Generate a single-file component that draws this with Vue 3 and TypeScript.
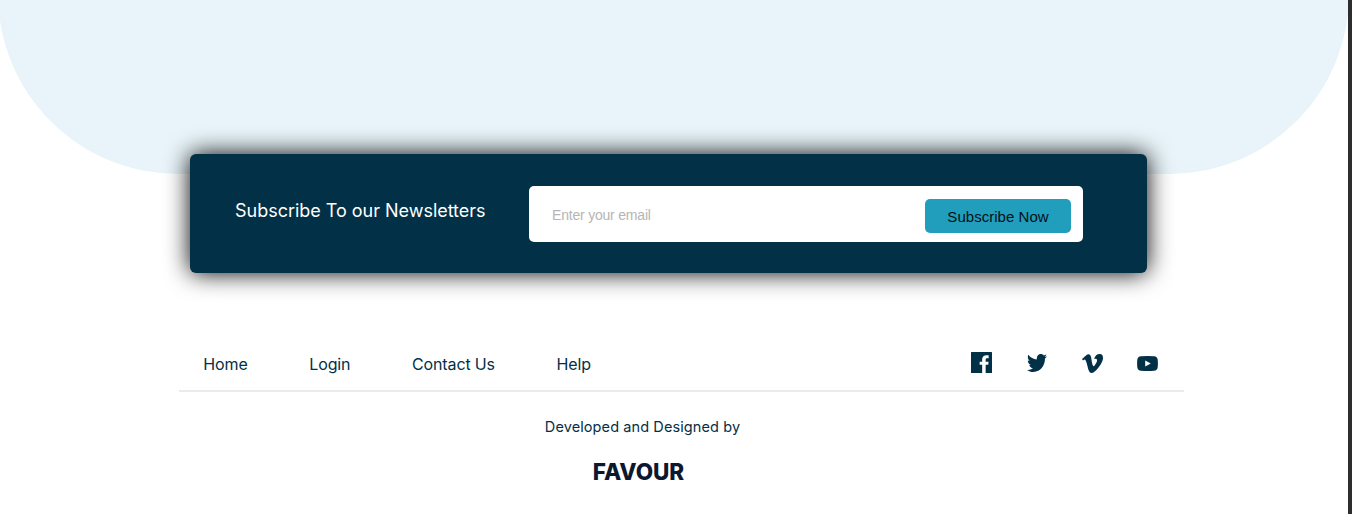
<script setup lang="ts">
import { ref } from 'vue'

interface Social {
  name: string
  viewBox: string
  width: number
  height: number
  path: string
}

const email = ref<string>('')
const links: string[] = ['Home', 'Login', 'Contact Us', 'Help']
const socials: Social[] = [
  {
    name: 'Facebook',
    viewBox: '64 64 384 384',
    width: 21,
    height: 21,
    path: 'M438 64H74c-6 0-10 4-10 10v364c0 6 4 10 10 10H268V296h-45.900v-56H268v-41.400c0-49.600 34.400-76.600 78.700-76.600 21.200 0 34 1.600 39.300 2.300v51.800h-25.300c-24.100 0-28.700 11.400-28.700 28.200V240h54l-7.500 56H332v152h106c6 0 10-4 10-10V74c0-6-4-10-10-10z',
  },
  {
    name: 'Twitter',
    viewBox: '20 64 472 384',
    width: 20,
    height: 18,
    path: 'M492 109.500c-17.400 7.700-36 12.900-55.600 15.300 20-12 35.400-31 42.600-53.600-18.700 11.100-39.400 19.200-61.500 23.500C399.800 75.800 374.600 64 346.800 64c-53.500 0-96.800 43.400-96.800 96.900 0 7.600.8 15 2.500 22.100-80.500-4-151.900-42.600-199.600-101.300-8.300 14.300-13.100 31-13.100 48.700 0 33.600 17.200 63.300 43.200 80.700-16-.4-31-4.800-44-12.100v1.200c0 47 33.400 86.100 77.700 95-8.100 2.200-16.700 3.400-25.500 3.400-6.200 0-12.300-.6-18.200-1.800 12.300 38.500 48.100 66.500 90.500 67.300-33.100 26-74.900 41.500-120.300 41.500-7.800 0-15.500-.5-23.100-1.400C62.800 432 113.700 448 168.300 448 346.600 448 444 300.300 444 172.200c0-4.200-.1-8.400-.3-12.500C462.600 146 479 129 492 109.500z',
  },
  {
    name: 'Vimeo',
    viewBox: '0 1.600 24 20.800',
    width: 21,
    height: 19,
    path: 'M23.977 6.416c-.105 2.338-1.739 5.543-4.894 9.609-3.268 4.247-6.026 6.370-8.290 6.370-1.409 0-2.578-1.294-3.553-3.881L5.322 11.400C4.603 8.816 3.834 7.522 3.010 7.522c-.179 0-.806.378-1.881 1.132L0 7.197c1.185-1.044 2.351-2.084 3.501-3.128C5.080 2.701 6.266 1.984 7.055 1.910c1.867-.180 3.016 1.100 3.447 3.838.465 2.953.789 4.789.971 5.507.539 2.450 1.131 3.674 1.776 3.674.502 0 1.256-.796 2.265-2.385 1.004-1.589 1.540-2.797 1.612-3.628.144-1.371-.395-2.061-1.614-2.061-.574 0-1.167.121-1.777.391 1.186-3.868 3.434-5.757 6.762-5.637 2.473.060 3.628 1.664 3.480 4.807z',
  },
  {
    name: 'YouTube',
    viewBox: '0 0 21 15',
    width: 21,
    height: 15,
    path: 'M4 .2Q10.500-.2 17 .2Q20.300.4 20.700 3.700Q21.100 7.500 20.700 11.300Q20.300 14.600 17 14.800Q10.500 15.200 4 14.800Q.7 14.600.3 11.300Q-.1 7.500.3 3.700Q.7.4 4 .2ZM8.200 4.500V10.500L13.800 7.500Z',
  },
]
</script>

<template>
  <div class="page">
    <main class="content">
      <div class="wave"></div>
      <form class="newsletter" @submit.prevent>
        <h2>Subscribe To our Newsletters</h2>
        <div class="field">
          <input v-model="email" type="email" placeholder="Enter your email" />
          <button type="submit">Subscribe Now</button>
        </div>
      </form>
      <footer>
        <div class="bar">
          <nav>
            <a v-for="link in links" :key="link">{{ link }}</a>
          </nav>
          <div class="socials">
            <a v-for="s in socials" :key="s.name" :aria-label="s.name">
              <svg :viewBox="s.viewBox" :width="s.width" :height="s.height" preserveAspectRatio="none">
                <path :d="s.path" fill="currentColor" fill-rule="evenodd" />
              </svg>
            </a>
          </div>
        </div>
        <p class="credit">Developed and Designed by</p>
        <p class="brand">FAVOUR</p>
      </footer>
    </main>
    <div class="edge"></div>
  </div>
</template>

<style>
body {
  margin: 0;
  overflow: hidden;
}
</style>

<style scoped>
.page {
  display: flex;
  width: 1352px;
  height: 514px;
  overflow: hidden;
  background: #fff;
  font-family: Inter, "Liberation Sans", sans-serif;
  color: #023047;
}
.content {
  flex: none;
  width: 1348px;
  height: 514px;
  overflow: hidden;
}
.edge {
  width: 4px;
  background: #2d2d2d;
}
.wave {
  width: 1351px;
  height: 374px;
  margin: -200px 0 0 -2px;
  border-radius: 0 0 180px 180px;
  background: #e8f4f9;
}
.newsletter {
  position: relative;
  display: flex;
  align-items: flex-start;
  box-sizing: border-box;
  width: 957px;
  height: 119px;
  margin: -20px 0 0 190px;
  padding: 32px 0 0 45px;
  border-radius: 6px;
  background: #023047;
  box-shadow: 0 0 25px #000;
}
h2 {
  width: 294px;
  margin: 13px 0 0;
  font-size: 18px;
  font-weight: 400;
  line-height: 24px;
  letter-spacing: -0.02px;
  color: #fff;
  white-space: nowrap;
}
.field {
  display: flex;
  align-items: center;
  box-sizing: border-box;
  width: 554px;
  height: 56px;
  padding: 0 12px 0 23px;
  border-radius: 5px;
  background: #fff;
}
input {
  flex: 1;
  min-width: 0;
  margin-top: 2px;
  padding: 0;
  border: 0;
  outline: 0;
  background: none;
  font: 14px "Liberation Sans", sans-serif;
  letter-spacing: -0.2px;
}
input::placeholder {
  color: #b5b5b5;
}
button {
  width: 146px;
  height: 34px;
  margin-top: 4px;
  padding: 1px 0 0;
  border: 0;
  border-radius: 5px;
  background: #219ebc;
  font: 15px "Liberation Sans", sans-serif;
  letter-spacing: 0.03px;
  color: #011019;
}
.bar {
  display: flex;
  justify-content: space-between;
  box-sizing: border-box;
  width: 1005px;
  height: 47px;
  margin: 72px 0 0 179px;
  padding: 0 26px 0 24.300px;
  border-bottom: 2px solid #ebebeb;
}
nav {
  display: flex;
  gap: 61.700px;
  padding-top: 9px;
  font-size: 16px;
  line-height: 20px;
  letter-spacing: -0.14px;
}
.socials {
  display: flex;
  align-items: center;
  gap: 35px;
  height: 35px;
}
.socials a {
  display: flex;
}
.socials a:nth-child(n + 3) {
  margin-top: 1px;
}
.socials a:last-child {
  margin-left: -1px;
}
.credit {
  width: 1285px;
  margin: 25px 0 0;
  font-size: 14.500px;
  line-height: 20px;
  letter-spacing: 0.1px;
  text-align: center;
}
.brand {
  width: 1277px;
  margin: 20px 0 0;
  font-size: 22.500px;
  font-weight: 850;
  line-height: 30px;
  letter-spacing: -0.05px;
  text-align: center;
  color: #0b1830;
}
</style>
